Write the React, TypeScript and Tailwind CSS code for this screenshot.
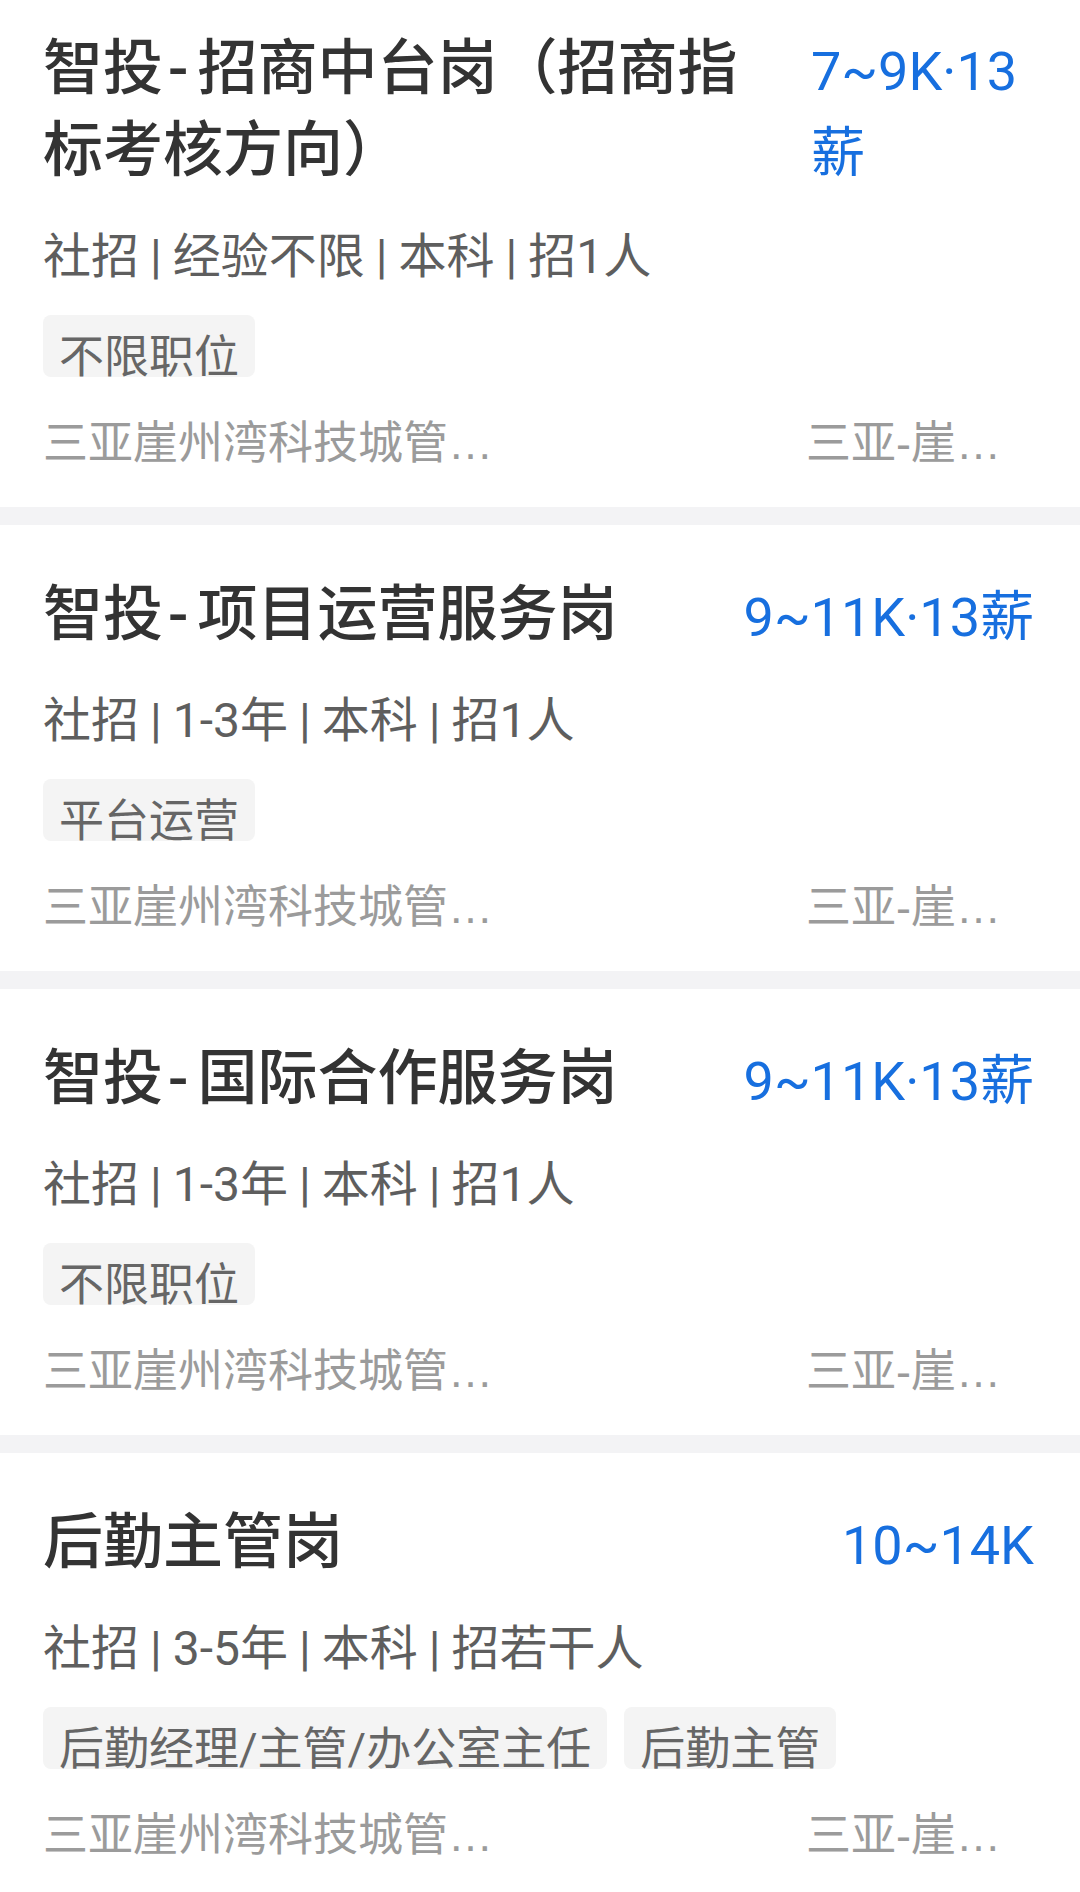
import React from "react";

type Job = {
  title: string;
  salary: string;
  meta: string[];
  tags: string[];
  first?: boolean;
};

const jobs: Job[] = [
  {
    title: "智投-招商中台岗（招商指标考核方向）",
    salary: "7~9K·13薪",
    meta: ["社招", "经验不限", "本科", "招1人"],
    tags: ["不限职位"],
    first: true,
  },
  {
    title: "智投-项目运营服务岗",
    salary: "9~11K·13薪",
    meta: ["社招", "1-3年", "本科", "招1人"],
    tags: ["平台运营"],
  },
  {
    title: "智投-国际合作服务岗",
    salary: "9~11K·13薪",
    meta: ["社招", "1-3年", "本科", "招1人"],
    tags: ["不限职位"],
  },
  {
    title: "后勤主管岗",
    salary: "10~14K",
    meta: ["社招", "3-5年", "本科", "招若干人"],
    tags: ["后勤经理/主管/办公室主任", "后勤主管"],
  },
];

function Title({ text }: { text: string }) {
  const parts = text.split("-");
  return (
    <>
      {parts.map((p, i) => (
        <React.Fragment key={i}>
          {i > 0 && <span className="ml-[5px] mr-[9px]">-</span>}
          {p}
        </React.Fragment>
      ))}
    </>
  );
}

function JobCard({ job }: { job: Job }) {
  return (
    <div
      className={
        job.first
          ? "bg-white pl-[43px] pr-[46px] pt-[28px] pb-[33px]"
          : "bg-white pl-[43px] pr-[46px] pt-[49px] pb-[33px]"
      }
    >
      <div className="flex items-start gap-[68px]">
        <h2 className="flex-1 min-w-0 text-[60px] leading-[82px] font-medium text-[#333333]">
          <Title text={job.title} />
        </h2>
        <div
          className={
            job.first
              ? "w-[223px] shrink-0 pt-[3px] text-[54px] leading-[82px] text-[#176fdf]"
              : "shrink-0 pt-[3px] text-[54px] leading-[82px] text-[#176fdf]"
          }
        >
          {job.salary}
        </div>
      </div>

      <div className="mt-[29px] text-[48px] leading-[66px] text-[#5e5e5e] whitespace-nowrap">
        {job.meta.map((m, i) => (
          <React.Fragment key={i}>
            {i > 0 && <span className="mx-[11px]">|</span>}
            <span>{m}</span>
          </React.Fragment>
        ))}
      </div>

      <div className="mt-[25px] flex gap-[17px]">
        {job.tags.map((t) => (
          <div
            key={t}
            className="h-[62px] overflow-hidden rounded-[8px] bg-[#f4f4f4] px-[16px] pt-[20px] text-[45px] leading-[45px] text-[#666666] whitespace-nowrap"
          >
            {t}
          </div>
        ))}
      </div>

      <div
        className="mt-[37px] flex items-center text-[45px] leading-[60px] text-[#9b9b9b]"
        style={{ fontFamily: '"Liberation Sans", "Noto Sans CJK SC", sans-serif' }}
      >
        <div className="w-[460px] truncate">三亚崖州湾科技城管理局</div>
        <div className="ml-auto mr-[23px] w-[205px] truncate">三亚-崖州湾科技城</div>
      </div>
    </div>
  );
}

export default function App() {
  return (
    <div
      className="w-[1080px] min-h-[1892px] bg-[#f3f3f5]"
      style={{ fontFamily: 'Roboto, "Noto Sans CJK SC", sans-serif' }}
    >
      {jobs.map((job, i) => (
        <React.Fragment key={i}>
          {i > 0 && <div className="h-[18px] bg-[#f3f3f5]" />}
          <JobCard job={job} />
        </React.Fragment>
      ))}
    </div>
  );
}
